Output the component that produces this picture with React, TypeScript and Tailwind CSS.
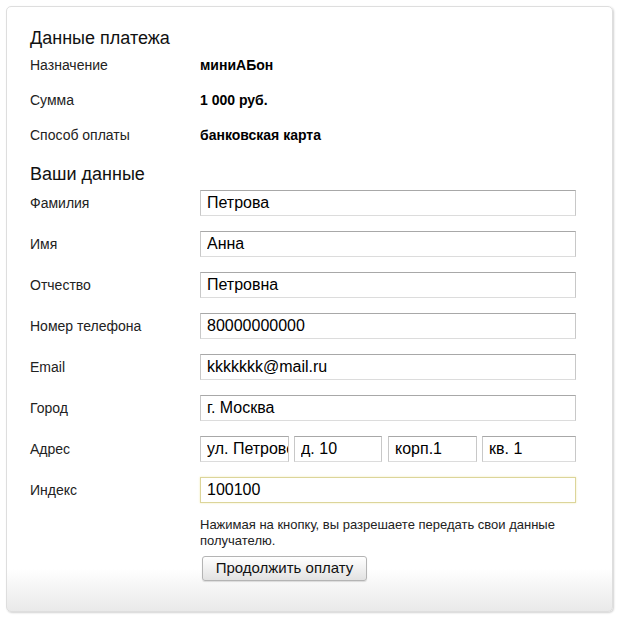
import React from "react";

interface IRow {
    label: string;
    value: string;
}

const paymentRows: IRow[] = [
    { label: "Назначение", value: "миниАБон" },
    { label: "Сумма", value: "1 000 руб." },
    { label: "Способ оплаты", value: "банковская карта" },
];

const personRows: IRow[] = [
    { label: "Фамилия", value: "Петрова" },
    { label: "Имя", value: "Анна" },
    { label: "Отчество", value: "Петровна" },
    { label: "Номер телефона", value: "80000000000" },
    { label: "Email", value: "kkkkkkk@mail.ru" },
    { label: "Город", value: "г. Москва" },
];

const inputCls =
    "h-[26px] border border-t-[#a8a8a8] border-x-[#c8c8c8] border-b-[#dcdcdc] bg-white pl-[6px] text-[16px] text-black outline-none";

function Field({ value, className }: { value: string; className: string }) {
    return <input readOnly value={value} className={inputCls + " " + className} />;
}

export default function App() {
    return (
        <div className="w-[619px] h-[619px] bg-white pt-[6px] pl-[6px]" style={{ fontFamily: "'Liberation Sans', Arial, sans-serif" }}>
            <div className="w-[607px] h-[606px] rounded-[5px] border border-[#dedede] shadow-[1px_1px_2px_rgba(0,0,0,0.18)] bg-gradient-to-b from-white from-[93%] to-[#e9e9e9] pl-[23px] pt-[21px]">
                <div className="h-[20px] text-[18px] leading-[20px] text-[#111]">Данные платежа</div>
                {paymentRows.map((row) => (
                    <div key={row.label} className="flex items-center h-[35px] text-[14px]">
                        <div className="w-[170px] text-[#222]">{row.label}</div>
                        <div className="font-bold text-black">{row.value}</div>
                    </div>
                ))}
                <div className="mt-[11px] h-[20px] text-[18px] leading-[20px] text-[#111]">Ваши данные</div>
                <div className="mt-[6px] flex flex-col gap-[15px]">
                    {personRows.map((row) => (
                        <div key={row.label} className="flex items-center">
                            <div className="w-[170px] text-[14px] text-[#222]">{row.label}</div>
                            <Field value={row.value} className="w-[376px]" />
                        </div>
                    ))}
                    <div className="flex items-center">
                        <div className="w-[170px] text-[14px] text-[#222]">Адрес</div>
                        <Field value="ул. Петровская" className="w-[89px]" />
                        <Field value="д. 10" className="ml-[5px] w-[88px]" />
                        <Field value="корп.1" className="ml-[6px] w-[89px]" />
                        <Field value="кв. 1" className="ml-[5px] w-[94px]" />
                    </div>
                    <div className="flex items-center">
                        <div className="w-[170px] text-[14px] text-[#222]">Индекс</div>
                        <input
                            readOnly
                            value="100100"
                            className="h-[26px] w-[376px] border border-[#dcd59a] bg-white pl-[6px] text-[16px] text-black outline-none shadow-[0_0_2px_#f1ecb8]"
                        />
                    </div>
                </div>
                <div className="ml-[170px] mt-[14px] w-[376px] text-[13px] leading-[16px] text-[#222]">
                    Нажимая на кнопку, вы разрешаете передать свои данные получателю.
                </div>
                <button className="ml-[172px] mt-[7px] h-[25px] w-[165px] rounded-[3px] border border-[#b4b4b4] bg-gradient-to-b from-white to-[#e2e2e2] text-[15px] text-[#111] shadow-[0_1px_1px_rgba(0,0,0,0.12)]">
                    Продолжить оплату
                </button>
            </div>
        </div>
    );
}
